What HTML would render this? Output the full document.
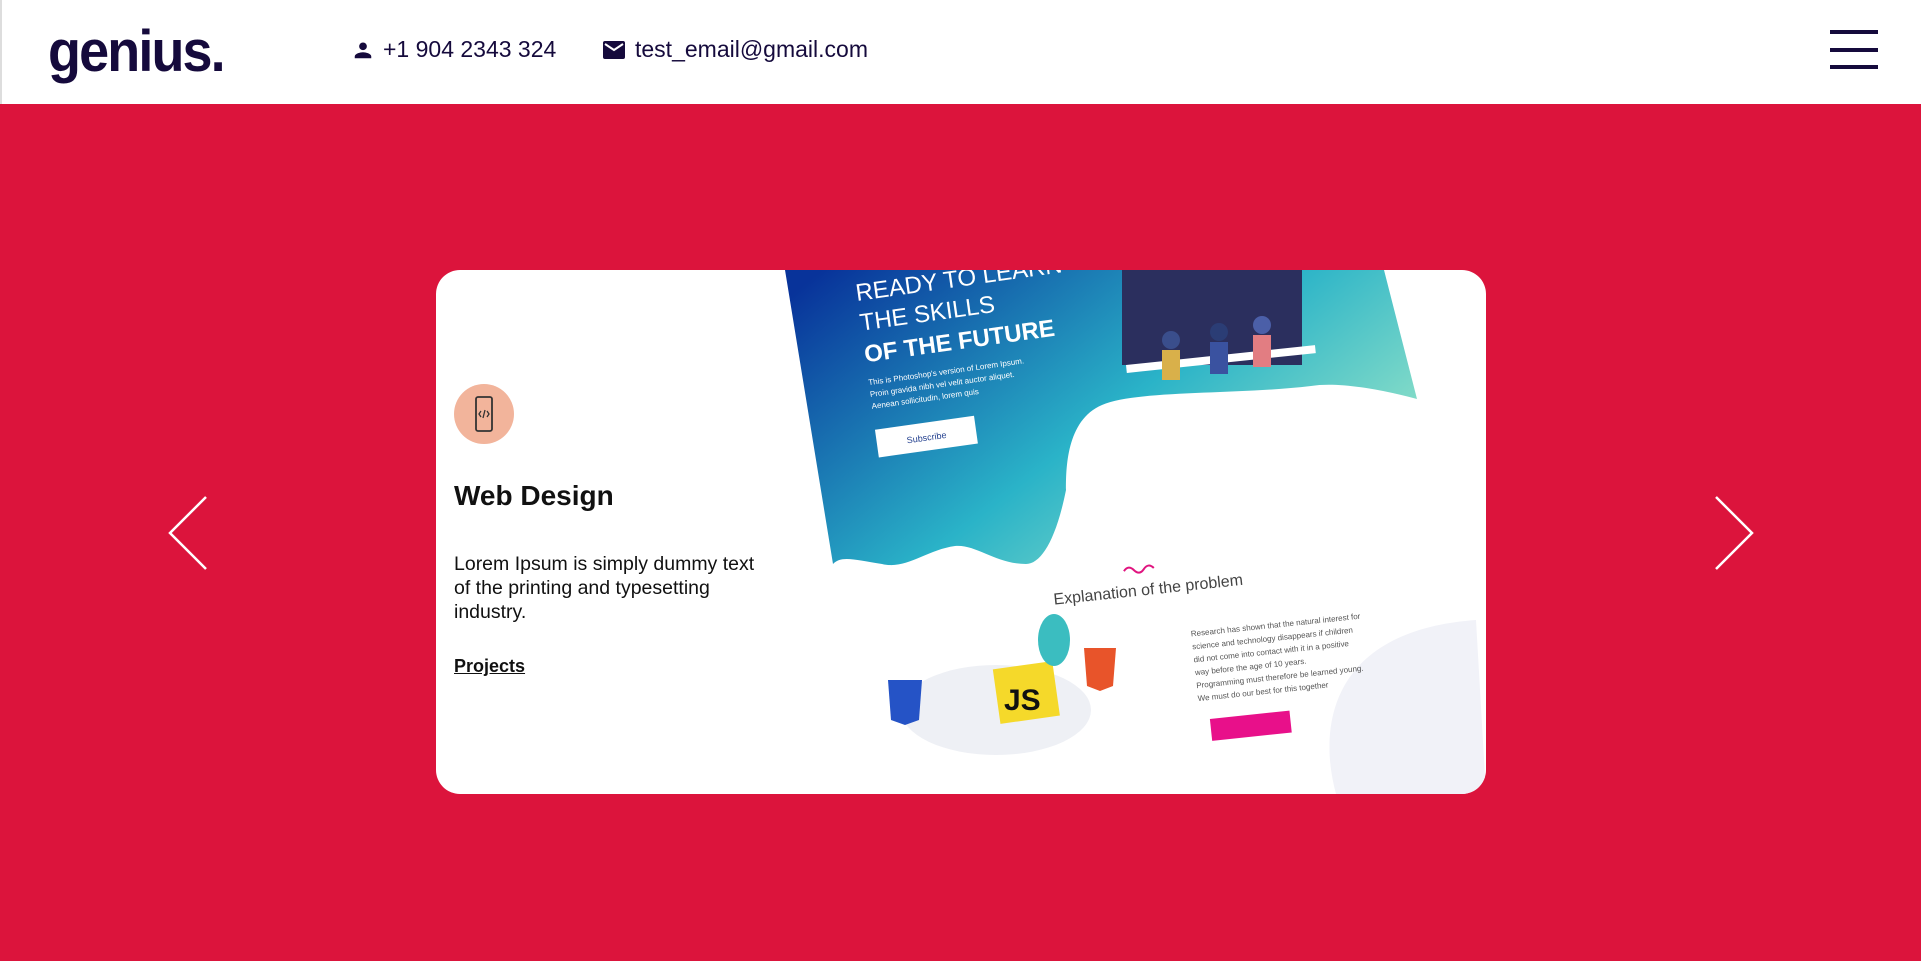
<!DOCTYPE html>
<html><head><meta charset="utf-8"><style>
*{margin:0;padding:0;box-sizing:border-box}
body{width:1921px;height:961px;overflow:hidden;background:#dc143c;font-family:"Liberation Sans",Roboto,sans-serif;position:relative}
header{position:absolute;left:0;top:0;width:1921px;height:104px;background:#fff;border-left:2px solid #ddd}
.logo{position:absolute;left:46px;top:18px;font-size:58px;font-weight:bold;color:#150a3c;letter-spacing:-2px;transform:scaleX(0.93);transform-origin:left}
.ct{position:absolute;top:36px;font-size:23px;color:#150a3c;display:flex;align-items:center;gap:9px}
.ham{position:absolute;left:1828px;width:48px;height:4px;background:#150a3c}
.card{position:absolute;left:436px;top:270px;width:1050px;height:524px;background:#fff;border-radius:24px;overflow:hidden}
.circ{position:absolute;left:18px;top:114px;width:60px;height:60px;border-radius:50%;background:#f2b49b}
h2{position:absolute;left:18px;top:210px;font-size:28px;color:#111}
p{position:absolute;left:18px;top:282px;width:320px;font-size:19.5px;line-height:24px;color:#111}
a{position:absolute;left:18px;top:386px;font-size:18px;font-weight:bold;color:#111;text-decoration:underline}
.arr{position:absolute;top:495px}
</style></head><body>
<header>
<div class="logo">genius.</div>
<div class="ct" style="left:350px"><svg width="22" height="22" viewBox="0 0 24 24"><circle cx="12" cy="8" r="4.2" fill="#150a3c"/><path d="M3 21v-2c0-3 6-4.5 9-4.5s9 1.5 9 4.5v2z" fill="#150a3c"/></svg>+1 904 2343 324</div>
<div class="ct" style="left:600px"><svg width="24" height="22" viewBox="0 0 24 20"><rect x="1" y="1" width="22" height="18" rx="2" fill="#150a3c"/><path d="M3 4l9 6 9-6" stroke="#fff" stroke-width="2" fill="none"/></svg>test_email@gmail.com</div>
<div class="ham" style="top:30px"></div><div class="ham" style="top:48px"></div><div class="ham" style="top:65px"></div>
</header>
<svg class="arr" style="left:166px" width="44" height="76" viewBox="0 0 44 76"><path d="M40 2L4 38l36 36" stroke="#fff" stroke-width="2.5" fill="none"/></svg>
<svg class="arr" style="left:1712px" width="44" height="76" viewBox="0 0 44 76"><path d="M4 2l36 36L4 74" stroke="#fff" stroke-width="2.5" fill="none"/></svg>
<div class="card">
<div class="circ"><svg width="60" height="60" viewBox="0 0 60 60"><rect x="22" y="13" width="16" height="34" rx="2" stroke="#333" stroke-width="1.8" fill="none"/><path d="M27 27l-2 3 2 3M33 27l2 3-2 3M31 26l-2 8" stroke="#333" stroke-width="1.3" fill="none"/></svg></div>
<h2>Web Design</h2>
<p>Lorem Ipsum is simply dummy text of the printing and typesetting industry.</p>
<a>Projects</a>
<svg style="position:absolute;left:0;top:0" width="1050" height="524" viewBox="0 0 1050 524">
<defs><linearGradient id="g" x1="0" y1="0.1" x2="1" y2="0.7"><stop offset="0" stop-color="#08339a"/><stop offset="0.55" stop-color="#2ab3c8"/><stop offset="1" stop-color="#9fe8c8"/></linearGradient></defs>
<path d="M349 0H948L981 129C940 118 900 112 875 116C800 125 700 120 666 135C630 150 630 200 630 220C620 270 605 294 590 294C560 294 540 274 519 276C490 280 470 300 446 294C420 290 405 285 397 294Z" fill="url(#g)"/>
<path d="M900 524C880 450 900 360 1040 350L1050 524Z" fill="#f1f2f8"/>
<rect x="686" y="0" width="180" height="95" fill="#2b2f5e"/>
<rect x="690" y="95" width="190" height="8" fill="#fff" transform="rotate(-6 690 95)"/>
<circle cx="735" cy="70" r="9" fill="#3a4e8c"/><rect x="726" y="80" width="18" height="30" fill="#d9b04a"/>
<circle cx="783" cy="62" r="9" fill="#2b3d75"/><rect x="774" y="72" width="18" height="32" fill="#3a52a0"/>
<circle cx="826" cy="55" r="9" fill="#4b5fa8"/><rect x="817" y="65" width="18" height="32" fill="#e27d82"/>
<g transform="rotate(-8 430 60)" fill="#fff" font-family="Liberation Sans,sans-serif">
<text x="425" y="30" font-size="24" font-weight="300">READY TO LEARN</text>
<text x="425" y="60" font-size="24" font-weight="300">THE SKILLS</text>
<text x="425" y="92" font-size="24" font-weight="bold">OF THE FUTURE</text>
<text x="425" y="115" font-size="8">This is Photoshop's version of Lorem Ipsum.</text>
<text x="425" y="127" font-size="8">Proin gravida nibh vel velit auctor aliquet.</text>
<text x="425" y="139" font-size="8">Aenean sollicitudin, lorem quis</text>
<rect x="425" y="160" width="100" height="28" fill="#fff"/>
<text x="455" y="178" font-size="9" fill="#23408f">Subscribe</text>
</g>
<g transform="rotate(-6 700 320)" font-family="Liberation Sans,sans-serif">
<text x="617" y="326" font-size="16" fill="#444">Explanation of the problem</text>
<path d="M690 300q5-6 10 0t10 0 10 0" stroke="#e0147f" stroke-width="2" fill="none"/>
<text x="750" y="372" font-size="8" fill="#555">Research has shown that the natural interest for</text>
<text x="750" y="385" font-size="8" fill="#555">science and technology disappears if children</text>
<text x="750" y="398" font-size="8" fill="#555">did not come into contact with it in a positive</text>
<text x="750" y="411" font-size="8" fill="#555">way before the age of 10 years.</text>
<text x="750" y="424" font-size="8" fill="#555">Programming must therefore be learned young.</text>
<text x="750" y="437" font-size="8" fill="#555">We must do our best for this together</text>
<rect x="760" y="456" width="80" height="22" fill="#e8108a"/>
</g>
<ellipse cx="560" cy="440" rx="95" ry="45" fill="#eef0f5"/>
<path d="M452 410h34l-3 40-14 5-14-5z" fill="#2553c6"/>
<rect x="560" y="395" width="60" height="55" fill="#f5d92a" transform="rotate(-8 590 420)"/>
<text x="568" y="440" font-size="30" font-weight="bold" fill="#111" font-family="Liberation Sans,sans-serif">JS</text>
<path d="M648 378h32l-3 38-13 5-13-5z" fill="#e8542a"/>
<ellipse cx="618" cy="370" rx="16" ry="26" fill="#3bbdc0"/>
</svg>
</div>
</body></html>
